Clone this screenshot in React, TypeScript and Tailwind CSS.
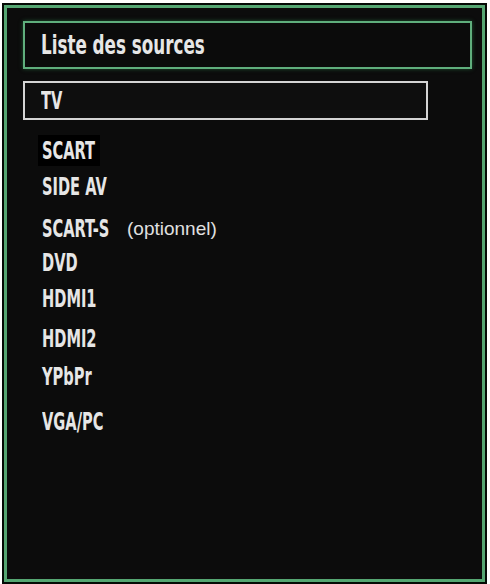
import React from "react";

const font = { fontFamily: '"Liberation Sans Narrow", "DejaVu Sans Condensed", "Liberation Sans", sans-serif' };

function Label({ text, title = false }: { text: string; title?: boolean }) {
  return (
    <span
      className={
        title
          ? "block whitespace-nowrap font-bold text-[27px] leading-[24px] text-[#e6e6e6] origin-left scale-x-[0.69]"
          : "block whitespace-nowrap font-bold text-[25px] leading-[24px] text-[#e6e6e6] origin-left scale-x-[0.65]"
      }
      style={font}
    >
      {text}
    </span>
  );
}

export default function App() {
  return (
    <div className="w-[490px] h-[584px] bg-white pt-[3px] pl-[2px]">
      <div className="w-[485px] h-[581px] border-2 border-[#040a05] bg-[#040a05]">
        <div className="w-full h-full border-[3px] border-[#55a672] bg-[#0c0c0c] pl-[16px] pt-[13px] flex flex-col">
          <div className="w-[449px] h-[48px] border-2 border-[#5fae7c] bg-[#0b0b0b] flex items-center pl-[16px] shadow-[0_0_4px_#1f4f30]">
            <Label text="Liste des sources" title />
          </div>
          <div className="mt-[12px] w-[405px] h-[39px] border-2 border-[#d4d4d4] bg-[#0e0e0e] flex items-center pl-[16px]">
            <Label text="TV" />
          </div>
          <div className="flex flex-col pl-[19px]">
            <div className="mt-[15px] -ml-[4px] w-[62px] h-[31px] bg-black pl-[4px] pt-[4px]">
              <Label text="SCART" />
            </div>
            <div className="mt-[9px]">
              <Label text="SIDE AV" />
            </div>
            <div className="mt-[18px] flex items-center">
              <div className="w-[85px]">
                <Label text="SCART-S" />
              </div>
              <span
                className="text-[19px] leading-[24px] text-[#e0e0e0]"
                style={{ fontFamily: '"Liberation Sans", Arial, sans-serif' }}
              >
                (optionnel)
              </span>
            </div>
            <div className="mt-[10px]">
              <Label text="DVD" />
            </div>
            <div className="mt-[12px]">
              <Label text="HDMI1" />
            </div>
            <div className="mt-[16px]">
              <Label text="HDMI2" />
            </div>
            <div className="mt-[14px]">
              <Label text="YPbPr" />
            </div>
            <div className="mt-[21px]">
              <Label text="VGA/PC" />
            </div>
          </div>
        </div>
      </div>
    </div>
  );
}
